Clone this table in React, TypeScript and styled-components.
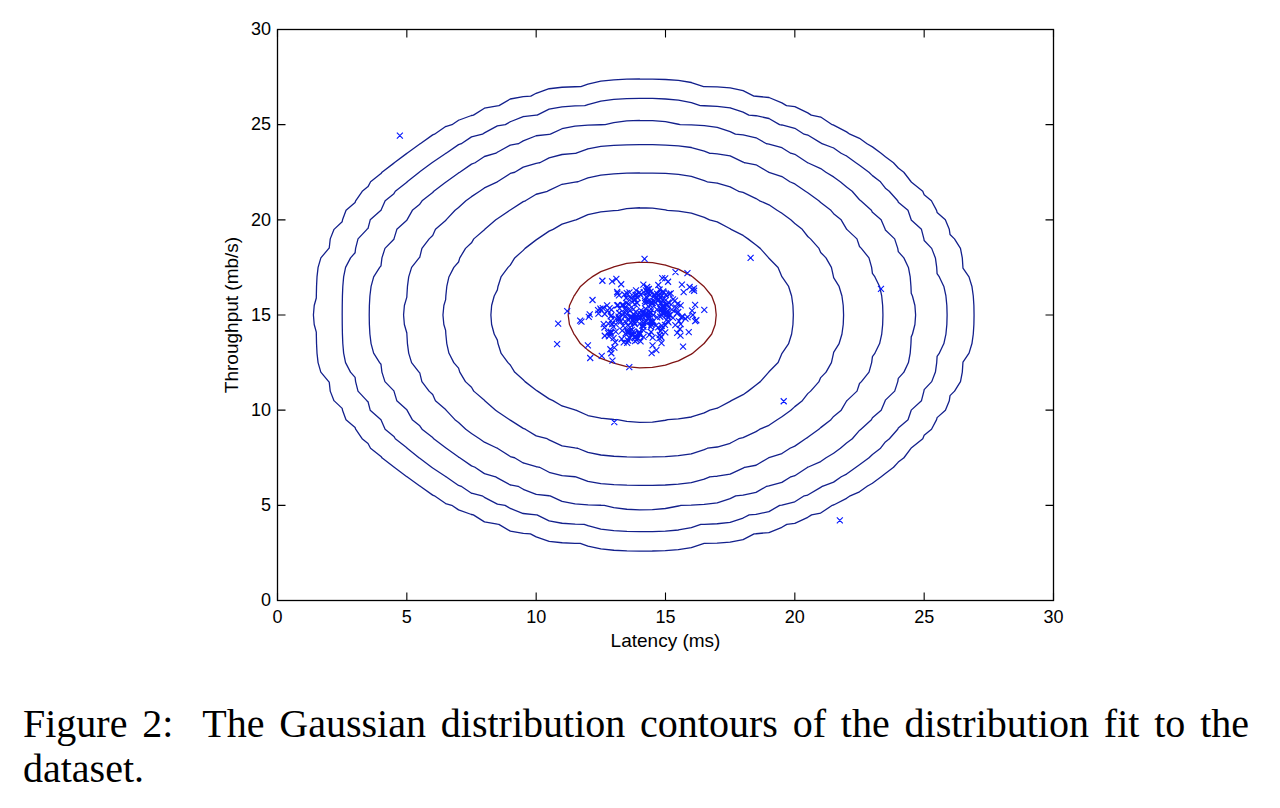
import React, { useMemo } from 'react';
import styled, { createGlobalStyle } from 'styled-components';

const GlobalStyle = createGlobalStyle`
  html, body { margin: 0; padding: 0; background: #ffffff; }
  body { width: 1280px; height: 808px; overflow: hidden; }
`;

const Page = styled.main`
  width: 1280px;
  height: 808px;
  display: flex;
  flex-direction: column;
  background: #ffffff;
`;

const Figure = styled.figure`
  margin: 0;
  display: flex;
  flex-direction: column;
`;

const Chart = styled.svg`
  display: block;
  width: 1280px;
  height: 701px;
  flex: none;
`;

const Caption = styled.figcaption`
  margin: 0;
  padding: 0 31px 0 23px;
  font-family: "Liberation Serif", "Times New Roman", serif;
  font-size: 40px;
  line-height: 45px;
  color: #000000;
  text-align: justify;
  text-align-last: left;
`;

const TickLabel = styled.text<{ $anchor: 'start' | 'middle' | 'end' }>`
  font-family: "Liberation Sans", Arial, sans-serif;
  font-size: 18px;
  fill: #000000;
  text-anchor: ${(p) => p.$anchor};
`;

const AxisLabel = styled.text`
  font-family: "Liberation Sans", Arial, sans-serif;
  font-size: 19px;
  fill: #000000;
  text-anchor: middle;
`;

const Frame = styled.rect`
  fill: none;
  stroke: #000000;
  stroke-width: 1.3;
`;

const Ticks = styled.path`
  fill: none;
  stroke: #000000;
  stroke-width: 1.1;
`;

const Contour = styled.path<{ $color: string }>`
  fill: none;
  stroke: ${(p) => p.$color};
  stroke-width: 1.3;
  stroke-linecap: round;
  stroke-linejoin: round;
`;

const Markers = styled.path`
  fill: none;
  stroke: #0a1cff;
  stroke-width: 1.15;
`;

// Axes geometry
const L = 277.5;
const R = 1053.5;
const T = 29.5;
const B = 600.5;
const px = (x: number) => L + (x * (R - L)) / 30;
const py = (y: number) => B - (y * (B - T)) / 30;

// Gaussian fit
const MU = [14.1122, 14.9977];
const S2 = [1.8326, 1.7097];
const NORM = 1 / (2 * Math.PI * Math.sqrt(S2[0] * S2[1]));
const pdf = (x: number, y: number) =>
  NORM * Math.exp(-0.5 * (((x - MU[0]) ** 2) / S2[0] + ((y - MU[1]) ** 2) / S2[1]));

function contourPath(level: number): string {
  const step = 0.5;
  const n = 71;
  const v: number[][] = [];
  for (let i = 0; i < n; i++) {
    v[i] = [];
    for (let j = 0; j < n; j++) v[i][j] = pdf(i * step, j * step);
  }
  let d = '';
  for (let i = 0; i < n - 1; i++) {
    for (let j = 0; j < n - 1; j++) {
      const x0 = i * step;
      const x1 = x0 + step;
      const y0 = j * step;
      const y1 = y0 + step;
      const a = v[i][j];
      const b = v[i + 1][j];
      const c = v[i + 1][j + 1];
      const e = v[i][j + 1];
      const pts: [number, number][] = [];
      const edge = (va: number, vb: number, xa: number, ya: number, xb: number, yb: number) => {
        if ((va < level) !== (vb < level)) {
          const t = (level - va) / (vb - va);
          pts.push([xa + t * (xb - xa), ya + t * (yb - ya)]);
        }
      };
      edge(a, b, x0, y0, x1, y0);
      edge(b, c, x1, y0, x1, y1);
      edge(c, e, x1, y1, x0, y1);
      edge(e, a, x0, y1, x0, y0);
      for (let k = 0; k + 1 < pts.length; k += 2) {
        d += `M${px(pts[k][0]).toFixed(2)} ${py(pts[k][1]).toFixed(2)}L${px(pts[k + 1][0]).toFixed(2)} ${py(pts[k + 1][1]).toFixed(2)}`;
      }
    }
  }
  return d;
}

function mulberry32(seed: number) {
  let s = seed >>> 0;
  return () => {
    s = (s + 0x6d2b79f5) >>> 0;
    let t = s;
    t = Math.imul(t ^ (t >>> 15), t | 1);
    t ^= t + Math.imul(t ^ (t >>> 7), t | 61);
    return ((t ^ (t >>> 14)) >>> 0) / 4294967296;
  };
}

const OUTLIERS: [number, number][] = [
  [4.73, 24.42], [18.29, 18.0], [23.33, 16.37], [19.57, 10.47], [21.74, 4.21],
  [13.02, 9.37], [10.85, 14.55], [10.81, 13.47], [11.2, 15.2], [14.19, 17.95],
  [12.09, 12.74], [12.0, 13.4], [12.87, 13.2], [12.95, 12.6], [13.6, 12.26],
  [16.5, 15.27], [12.56, 16.8], [13.1, 16.9], [14.5, 13.4], [11.7, 14.7],
  [11.75, 14.65], [16.1, 16.4], [15.9, 14.1],
];

function makePoints(): [number, number][] {
  const rnd = mulberry32(20240607);
  const pts: [number, number][] = [...OUTLIERS];
  const rho = 0.35;
  while (pts.length < 307) {
    const u1 = Math.max(rnd(), 1e-9);
    const u2 = rnd();
    const r = Math.sqrt(-2 * Math.log(u1));
    const z1 = r * Math.cos(2 * Math.PI * u2);
    const z2 = r * Math.sin(2 * Math.PI * u2);
    const x = 14.15 + 0.95 * z1;
    const y = 15.05 + 0.88 * (rho * z1 + Math.sqrt(1 - rho * rho) * z2);
    if (x < 12.0 || x > 16.4 || y < 12.7 || y > 17.4) continue;
    pts.push([x, y]);
  }
  return pts;
}

const TICKS = [0, 5, 10, 15, 20, 25, 30];
const TL = 8;

export default function App() {
  const { contours, markers, ticks } = useMemo(() => {
    const levels = [-20, -17, -14, -11, -8, -5, -2];
    const contours = levels.map((e) => ({
      d: contourPath(Math.pow(10, e)),
      color: e === -2 ? '#7f1414' : '#13208c',
    }));
    const h = 3;
    const markers = makePoints()
      .map(([x, y]) => {
        const cx = px(x);
        const cy = py(y);
        return `M${(cx - h).toFixed(2)} ${(cy - h).toFixed(2)}L${(cx + h).toFixed(2)} ${(cy + h).toFixed(2)}M${(cx - h).toFixed(2)} ${(cy + h).toFixed(2)}L${(cx + h).toFixed(2)} ${(cy - h).toFixed(2)}`;
      })
      .join('');
    let ticks = '';
    TICKS.forEach((t) => {
      const x = px(t);
      const y = py(t);
      ticks += `M${x} ${B}V${B - TL}M${x} ${T}V${T + TL}`;
      ticks += `M${L} ${y}H${L + TL}M${R} ${y}H${R - TL}`;
    });
    return { contours, markers, ticks };
  }, []);

  return (
    <Page>
      <GlobalStyle />
      <Figure>
        <Chart viewBox="0 0 1280 701">
          <defs>
            <clipPath id="axes-clip">
              <rect x={L} y={T} width={R - L} height={B - T} />
            </clipPath>
          </defs>
          <g clipPath="url(#axes-clip)">
            {contours.map((c, i) => (
              <Contour key={i} d={c.d} $color={c.color} />
            ))}
            <Markers d={markers} />
          </g>
          <Frame x={L} y={T} width={R - L} height={B - T} />
          <Ticks d={ticks} />
          {TICKS.map((t) => (
            <TickLabel key={`x${t}`} x={px(t)} y={622.5} $anchor="middle">
              {t}
            </TickLabel>
          ))}
          {TICKS.map((t) => (
            <TickLabel key={`y${t}`} x={271} y={py(t) + 5.8} $anchor="end">
              {t}
            </TickLabel>
          ))}
          <AxisLabel x={(L + R) / 2} y={647}>
            Latency (ms)
          </AxisLabel>
          <AxisLabel transform={`translate(238 ${(T + B) / 2}) rotate(-90)`}>
            Throughput (mb/s)
          </AxisLabel>
        </Chart>
        <Caption>
          Figure 2:&nbsp; The Gaussian distribution contours of the distribution fit to the dataset.
        </Caption>
      </Figure>
    </Page>
  );
}
